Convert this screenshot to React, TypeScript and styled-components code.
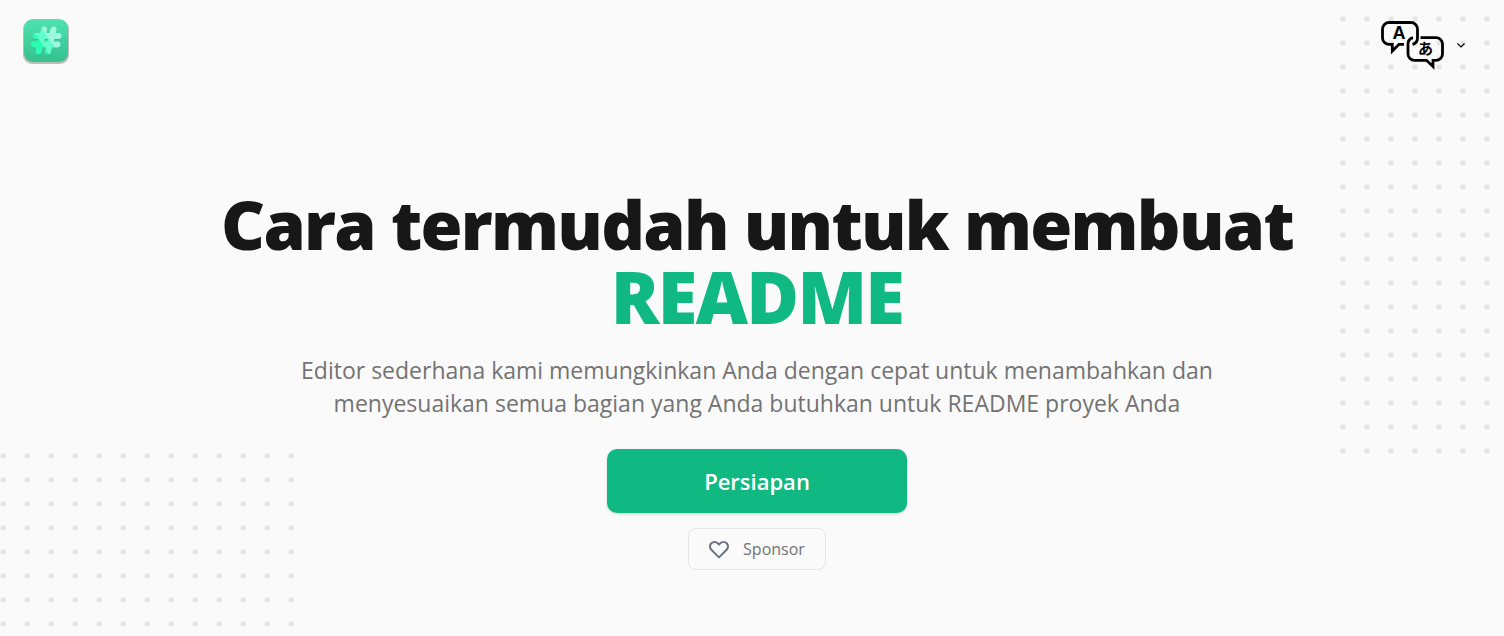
import React from 'react';
import styled, { createGlobalStyle } from 'styled-components';

const GlobalStyle = createGlobalStyle`
  *, *::before, *::after { box-sizing: border-box; }
  body {
    margin: 0;
    background: #fafafa;
    color: #171717;
    font-family: 'Segoe UI', 'Open Sans', 'Noto Sans', sans-serif;
  }
`;

const Page = styled.div`
  position: relative;
  min-height: 100vh;
  overflow: hidden;
`;

const Dots = styled.svg<{ $corner: 'top' | 'bottom' }>`
  position: absolute;
  z-index: 0;
  pointer-events: none;
  ${({ $corner }) =>
    $corner === 'top'
      ? 'top: 16px; right: 0; width: 164px; height: 440px;'
      : 'bottom: 0; left: 0; width: 294px; height: 184px;'}
`;

const Header = styled.header`
  position: relative;
  z-index: 1;
  display: flex;
  align-items: flex-start;
  justify-content: space-between;
  padding: 18px 38px 0 22px;
`;

const HomeLink = styled.a`
  display: block;
  height: 48px;
`;

const LanguageButton = styled.button`
  display: flex;
  align-items: center;
  gap: 11px;
  margin: 2px 0 0;
  padding: 0;
  border: 0;
  background: none;
  color: #000;
  cursor: pointer;
`;

const Hero = styled.main`
  position: relative;
  z-index: 1;
  display: flex;
  flex-direction: column;
  align-items: center;
  padding: 118px 16px 60px 26px;
  text-align: center;
`;

const Title = styled.h1`
  margin: 0;
  font-size: 68px;
  line-height: 72px;
  font-weight: 900;
  letter-spacing: -0.025em;
`;

const Accent = styled.span`
  display: block;
  color: #10b981;
  font-size: 72px;
`;

const Lead = styled.p`
  max-width: 940px;
  margin: 22px 0 0;
  color: #737373;
  font-size: 23px;
  line-height: 33px;
`;

const PrimaryButton = styled.button`
  width: 300px;
  max-width: 100%;
  height: 64px;
  margin: 29px 0 0;
  border: 0;
  border-radius: 10px;
  background: #10b981;
  box-shadow: 0 1px 3px rgba(0, 0, 0, 0.16);
  color: #fff;
  font: inherit;
  font-size: 22px;
  font-weight: 600;
  cursor: pointer;
`;

const SponsorLink = styled.a`
  display: flex;
  align-items: center;
  gap: 12px;
  height: 42px;
  margin: 15px 0 0;
  padding: 0 20px 0 18px;
  border: 1px solid #e5e5e5;
  border-radius: 8px;
  background: #fafafa;
  color: #737373;
  font-size: 16px;
  text-decoration: none;
`;

function DotField({ corner }: { corner: 'top' | 'bottom' }) {
  const id = `dots-${corner}`;
  return (
    <Dots $corner={corner} aria-hidden="true">
      <defs>
        <pattern id={id} width="24" height="24" patternUnits="userSpaceOnUse">
          <rect x="0.7" y={corner === 'top' ? 0.6 : 1.4} width="4.8" height="4.8" fill="#e5e5e5" />
        </pattern>
      </defs>
      <rect width="100%" height="100%" fill={`url(#${id})`} />
    </Dots>
  );
}

function Logo() {
  return (
    <svg width="48" height="48" viewBox="0 0 48 48" role="img" aria-label="Logo">
      <defs>
        <linearGradient id="tile" x1="0" y1="0" x2="0" y2="1">
          <stop offset="0" stopColor="#4de3b1" />
          <stop offset="1" stopColor="#35c08e" />
        </linearGradient>
        <linearGradient id="mark" gradientUnits="userSpaceOnUse" x1="12" y1="30" x2="36" y2="14">
          <stop offset="0.3" stopColor="#2bfdb2" />
          <stop offset="0.32" stopColor="#62ffca" />
          <stop offset="0.6" stopColor="#62ffca" />
          <stop offset="0.62" stopColor="#a0f8dc" />
        </linearGradient>
      </defs>
      <rect x="1" y="2" width="46" height="44" rx="9" fill="#bdbdbd" />
      <rect x="2" y="1" width="44" height="43" rx="9" fill="url(#tile)" />
      <g fill="none" strokeWidth="6" strokeLinecap="round">
        <path d="M22 11.5L16.5 33.5M31.5 11.5L26 33.5M13.5 18H36.5M12 26.5H35.5" stroke="#2aa87c" strokeOpacity="0.35" transform="translate(0 1)" />
        <path d="M22 11.5L16.5 33.5M31.5 11.5L26 33.5M13.5 18H36.5M12 26.5H35.5" stroke="url(#mark)" />
      </g>
    </svg>
  );
}

function LanguageIcon() {
  return (
    <svg width="64" height="50" viewBox="0 -1 64 50" aria-hidden="true">
      <g fill="none" stroke="currentColor" strokeWidth="2.8">
        <path d="M23 23.3H18L11.3 30V23.3H8A6.5 6.5 0 0 1 1.5 17V8A6.5 6.5 0 0 1 8 1.5H30A6.5 6.5 0 0 1 36.5 8V17A6.5 6.5 0 0 1 31.5 23.3" />
        <path d="M39.5 16.7H55A6.5 6.5 0 0 1 61.5 23V33A6.5 6.5 0 0 1 55 39.3H52V45.5L45.5 39.3H33.5A6.5 6.5 0 0 1 27 33V23A6.5 6.5 0 0 1 32 16.7" />
      </g>
      <g fill="currentColor" fontWeight="700" textAnchor="middle">
        <text x="18" y="18" fontSize="18" fontFamily="'Liberation Sans', sans-serif">A</text>
        <text x="44.5" y="33" fontSize="15" fontFamily="'Noto Sans CJK JP', sans-serif">あ</text>
      </g>
    </svg>
  );
}

export default function App() {
  return (
    <>
      <GlobalStyle />
      <Page>
        <DotField corner="top" />
        <DotField corner="bottom" />
        <Header>
          <HomeLink href="#">
            <Logo />
          </HomeLink>
          <LanguageButton type="button" aria-label="Bahasa" aria-haspopup="menu">
            <LanguageIcon />
            <svg width="10" height="10" viewBox="0 0 10 10" fill="none" stroke="currentColor" strokeWidth="1.2" aria-hidden="true">
              <path d="M1.5 3.5L5 7L8.5 3.5" />
            </svg>
          </LanguageButton>
        </Header>
        <Hero>
          <Title>
            Cara termudah untuk membuat <Accent>README</Accent>
          </Title>
          <Lead>
            Editor sederhana kami memungkinkan Anda dengan cepat untuk menambahkan dan menyesuaikan semua bagian yang
            Anda butuhkan untuk README proyek Anda
          </Lead>
          <PrimaryButton type="button">Persiapan</PrimaryButton>
          <SponsorLink href="#sponsor">
            <svg width="24" height="24" viewBox="0 0 24 24" fill="none" stroke="#6b7280" strokeWidth="2" strokeLinecap="round" strokeLinejoin="round" aria-hidden="true">
              <path d="M4.318 6.318a4.5 4.5 0 000 6.364L12 20.364l7.682-7.682a4.5 4.5 0 00-6.364-6.364L12 7.636l-1.318-1.318a4.5 4.5 0 00-6.364 0z" />
            </svg>
            Sponsor
          </SponsorLink>
        </Hero>
      </Page>
    </>
  );
}
